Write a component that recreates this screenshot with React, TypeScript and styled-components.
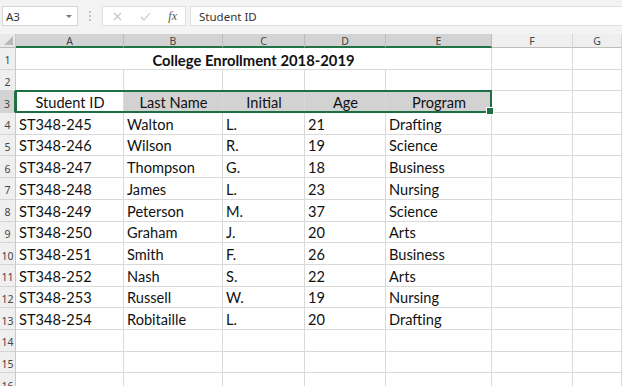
import React from "react";
import styled, { createGlobalStyle } from "styled-components";

const Global = createGlobalStyle`
  html, body { margin: 0; padding: 0; background: #ffffff; overflow: hidden; }
  * { box-sizing: border-box; }
`;

const Page = styled.div`
  width: 622px;
  height: 386px;
  overflow: hidden;
  background: #fff;
  font-family: "Segoe UI", "Noto Sans", sans-serif;
`;

const FormulaBar = styled.div`
  height: 34px;
  background: #f3f3f3;
  display: flex;
  align-items: flex-start;
  padding: 6px 0 0 2px;
`;

const NameBox = styled.div`
  width: 76px;
  height: 20px;
  background: #fff;
  border: 1px solid #d6d6d6;
  display: flex;
  align-items: center;
  justify-content: space-between;
  padding: 0 5px 0 3px;
  font-size: 11.5px;
  color: #333;
`;

const Caret = styled.span`
  width: 0;
  height: 0;
  border-left: 3px solid transparent;
  border-right: 3px solid transparent;
  border-top: 3px solid #777;
`;

const Dots = styled.div`
  width: 24px;
  height: 20px;
  display: flex;
  flex-direction: column;
  align-items: center;
  justify-content: center;
  gap: 2px;
  & > i { width: 2px; height: 2px; background: #c4c4c4; display: block; }
`;

const FxBox = styled.div`
  width: 84px;
  height: 20px;
  background: #fff;
  border: 1px solid #e0e0e0;
  display: flex;
  align-items: center;
  justify-content: space-between;
  padding: 0 8px 0 10px;
`;

const FxLabel = styled.span`
  font-family: "Liberation Serif", serif;
  font-style: italic;
  font-size: 12px;
  color: #555;
`;

const FormulaInput = styled.div`
  flex: 1;
  margin-left: 4px;
  height: 20px;
  background: #fff;
  border: 1px solid #e0e0e0;
  border-right: none;
  display: flex;
  align-items: center;
  padding-left: 8px;
  font-size: 11.5px;
  color: #333;
`;

const Sheet = styled.div`
  display: grid;
  grid-template-columns: 16px 108px 99px 82px 81px 106px 81px 1fr;
  grid-template-rows: 14px;
  grid-auto-rows: 21.7px;
`;

const Corner = styled.div`
  grid-row: 1;
  grid-column: 1;
  background: #e9e9e9;
  border-right: 1px solid #c8c8c8;
  border-bottom: 1px solid #b9b9b9;
  position: relative;
  &::after {
    content: "";
    position: absolute;
    right: 2px;
    bottom: 2px;
    width: 0;
    height: 0;
    border-left: 9px solid transparent;
    border-bottom: 9px solid #b9b9b9;
  }
`;

const ColHead = styled.div<{ $sel?: boolean; $c: number }>`
  grid-row: 1;
  grid-column: ${(p) => p.$c};
  background: ${(p) => (p.$sel ? "#d3d3d3" : "#efefef")};
  border-right: 1px solid ${(p) => (p.$sel ? "#bdbdbd" : "#d6d6d6")};
  border-bottom: ${(p) => (p.$sel ? "2px solid #217346" : "1px solid #bdbdbd")};
  display: flex;
  align-items: center;
  justify-content: center;
  font-size: 10.5px;
  color: #444;
  padding-top: 1px;
`;

const RowHead = styled.div<{ $sel?: boolean; $r: number }>`
  grid-row: ${(p) => p.$r + 1};
  grid-column: 1;
  background: ${(p) => (p.$sel ? "#d3d3d3" : "#efefef")};
  border-right: ${(p) => (p.$sel ? "2px solid #217346" : "1px solid #c8c8c8")};
  border-bottom: 1px solid #d4d4d4;
  display: flex;
  align-items: center;
  justify-content: center;
  font-size: 10.5px;
  color: #444;
  padding-top: 4px;
`;

const Cell = styled.div<{ $fill?: boolean; $center?: boolean; $r: number; $c: number }>`
  grid-row: ${(p) => p.$r + 1};
  grid-column: ${(p) => p.$c};
  background: ${(p) => (p.$fill ? "#d2d2d2" : "#fff")};
  border-right: 1px solid #d9d9d9;
  border-bottom: 1px solid #d9d9d9;
  display: flex;
  align-items: flex-end;
  justify-content: ${(p) => (p.$center ? "center" : "flex-start")};
  padding: 0 2px 0 3px;
  font-family: Lato, "Open Sans", sans-serif;
  font-size: 14.6px;
  color: #111;
  white-space: nowrap;
  line-height: 18px;
`;

const TitleCell = styled.div`
  grid-row: 2;
  grid-column: 2 / 7;
  background: #fff;
  border-right: 1px solid #d9d9d9;
  border-bottom: 1px solid #d9d9d9;
  display: flex;
  align-items: flex-end;
  justify-content: center;
  font-family: Lato, "Open Sans", sans-serif;
  font-weight: 700;
  font-size: 14.8px;
  line-height: 18px;
  color: #111;
`;

const Selection = styled.div`
  grid-row: 4;
  grid-column: 2 / 7;
  border: 2px solid #1e6e44;
  margin: -1px 0 0 -1px;
  pointer-events: none;
  position: relative;
  z-index: 2;
  &::after {
    content: "";
    position: absolute;
    right: -4px;
    bottom: -4px;
    width: 6px;
    height: 6px;
    background: #1e6e44;
    border: 1px solid #fff;
  }
`;

const cols = ["A", "B", "C", "D", "E", "F", "G"];

const data: string[][] = [
  ["ST348-245", "Walton", "L.", "21", "Drafting"],
  ["ST348-246", "Wilson", "R.", "19", "Science"],
  ["ST348-247", "Thompson", "G.", "18", "Business"],
  ["ST348-248", "James", "L.", "23", "Nursing"],
  ["ST348-249", "Peterson", "M.", "37", "Science"],
  ["ST348-250", "Graham", "J.", "20", "Arts"],
  ["ST348-251", "Smith", "F.", "26", "Business"],
  ["ST348-252", "Nash", "S.", "22", "Arts"],
  ["ST348-253", "Russell", "W.", "19", "Nursing"],
  ["ST348-254", "Robitaille", "L.", "20", "Drafting"],
];

const headers = ["Student ID", "Last Name", "Initial", "Age", "Program"];

const Icon = ({ kind }: { kind: "x" | "check" }) =>
  kind === "x" ? (
    <svg width="9" height="9" viewBox="0 0 9 9">
      <path d="M1 1L8 8M8 1L1 8" stroke="#c4c4c4" strokeWidth="1.1" fill="none" />
    </svg>
  ) : (
    <svg width="11" height="9" viewBox="0 0 11 9">
      <path d="M1 5L4 8L10 1" stroke="#c4c4c4" strokeWidth="1.1" fill="none" />
    </svg>
  );

export default function App() {
  const items: React.ReactNode[] = [];
  for (let r = 1; r <= 16; r++) {
    items.push(
      <RowHead key={`rh${r}`} $r={r} $sel={r === 3}>
        {r}
      </RowHead>
    );
    if (r === 1) {
      items.push(<TitleCell key="title">College Enrollment 2018-2019</TitleCell>);
      items.push(<Cell key="1F" $r={1} $c={7} />);
      items.push(<Cell key="1G" $r={1} $c={8} />);
      continue;
    }
    for (let c = 0; c < 7; c++) {
      let text = "";
      let center = false;
      let fill = false;
      if (r === 3 && c < 5) {
        text = headers[c];
        center = true;
        fill = c > 0;
      } else if (r >= 4 && r <= 13 && c < 5) {
        text = data[r - 4][c];
      }
      items.push(
        <Cell key={`${r}-${c}`} $r={r} $c={c + 2} $center={center} $fill={fill}>
          {text}
        </Cell>
      );
    }
  }

  return (
    <Page>
      <Global />
      <FormulaBar>
        <NameBox>
          <span>A3</span>
          <Caret />
        </NameBox>
        <Dots>
          <i />
          <i />
          <i />
        </Dots>
        <FxBox>
          <Icon kind="x" />
          <Icon kind="check" />
          <FxLabel>fx</FxLabel>
        </FxBox>
        <FormulaInput>Student ID</FormulaInput>
      </FormulaBar>
      <Sheet>
        <Corner />
        {cols.map((c, i) => (
          <ColHead key={c} $c={i + 2} $sel={i < 5}>
            {c}
          </ColHead>
        ))}
        {items}
        <Selection />
      </Sheet>
    </Page>
  );
}
